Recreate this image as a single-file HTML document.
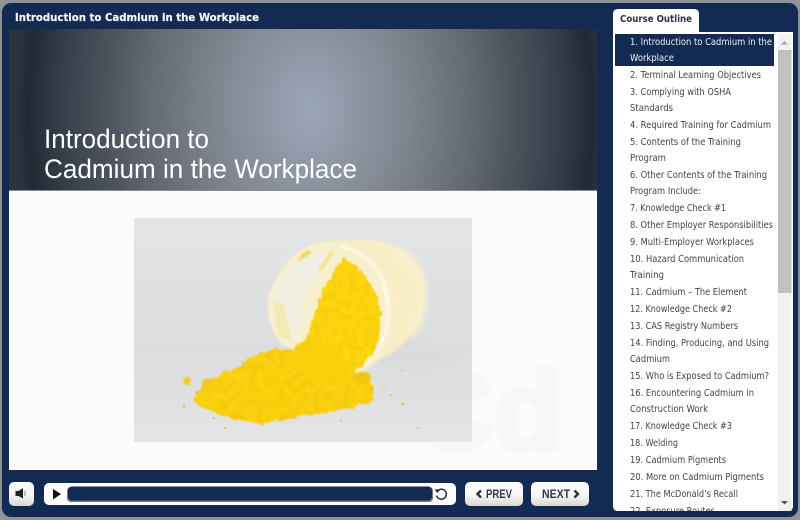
<!DOCTYPE html>
<html><head><meta charset="utf-8"><style>
html,body{margin:0;padding:0;background:#8a8d90}
#w{position:relative;width:800px;height:520px;overflow:hidden;background:#8f9295}
#f{position:absolute;left:2px;top:3px;width:796px;height:514px;background:#132a52;border-radius:9px}
#h{position:absolute;left:9px;top:29px;width:588px;height:162px;background:radial-gradient(ellipse 294px 400px at 301px 82px,#9ba6b8 0%,#7f858f 33%,#5f666f 58%,#4e555f 68%,#353f4a 85%,#1f2a35 96%,#2a343e 100%)}
#b{position:absolute;left:9px;top:191px;width:588px;height:279px;background:#fbfbfb}
svg{position:absolute;left:0;top:0}
</style></head><body><div id="w"><div id="f"></div><div id="h"></div><div id="b"></div>
<svg width="800" height="520" viewBox="0 0 800 520" xmlns="http://www.w3.org/2000/svg">
<defs>
<linearGradient id="ph" x1="0" y1="0" x2="0" y2="1"><stop offset="0" stop-color="#e3e4e6"/><stop offset=".6" stop-color="#dcdddf"/><stop offset="1" stop-color="#e4e4e6"/></linearGradient>
<linearGradient id="btn" x1="0" y1="0" x2="0" y2="1"><stop offset="0" stop-color="#ffffff"/><stop offset=".5" stop-color="#f8f8f8"/><stop offset="1" stop-color="#d8d8d8"/></linearGradient>
<filter id="b1" x="-20%" y="-20%" width="140%" height="140%"><feGaussianBlur stdDeviation="1"/></filter>
<filter id="b3" x="-30%" y="-30%" width="160%" height="160%"><feGaussianBlur stdDeviation="4"/></filter>
<filter id="pw" x="-10%" y="-10%" width="120%" height="120%">
<feTurbulence type="fractalNoise" baseFrequency=".14" numOctaves="3" seed="4" result="n"/>
<feDisplacementMap in="SourceGraphic" in2="n" xChannelSelector="R" yChannelSelector="G" scale="8" result="d"/>
<feColorMatrix in="n" type="matrix" values="1 0 0 0 0 1 0 0 0 0 1 0 0 0 0 0 0 0 0 1" result="g"/>
<feComposite in="d" in2="g" operator="arithmetic" k1=".22" k2=".89" k3="0" k4="0" result="t"/>
<feComposite in="t" in2="d" operator="in"/>
<feGaussianBlur stdDeviation=".9"/>
</filter>
<clipPath id="pc"><rect x="134" y="218" width="338" height="224"/></clipPath>
<clipPath id="lc"><rect x="613" y="32" width="165" height="479"/></clipPath>
</defs>

<!-- heading -->
<g fill="#fff" font-family="'Liberation Sans',sans-serif" font-size="26.600">
<text x="44" y="148" textLength="165" lengthAdjust="spacingAndGlyphs">Introduction to</text>
<text x="44" y="178" textLength="313" lengthAdjust="spacingAndGlyphs">Cadmium in the Workplace</text>
</g>
<rect x="9" y="190" width="588" height="1" fill="#8a8d92"/>
<text x="15" y="21" fill="#f4f5f7" stroke="#f4f5f7" stroke-width=".2" font-family="'DejaVu Sans',sans-serif" font-weight="700" font-size="11" textLength="244" lengthAdjust="spacingAndGlyphs">Introduction to Cadmium in the Workplace</text>

<!-- watermark -->
<text x="562" y="450" text-anchor="end" fill="#f7f7f7" stroke="#f7f7f7" stroke-width="5" font-family="'Liberation Sans',sans-serif" font-weight="700" font-size="112">Cd</text>

<!-- photo -->
<g clip-path="url(#pc)">
<rect x="134" y="218" width="338" height="224" fill="url(#ph)"/>
<ellipse cx="415" cy="358" rx="40" ry="16" fill="#d9dadc" filter="url(#b3)" opacity=".5"/>
<path d="M315 244Q345 238 372 240Q405 244 421 268Q430 295 418 325Q402 350 378 360L352 374Z" fill="#f8edc4" filter="url(#b1)"/>
<path d="M395 252Q416 264 421 290Q424 312 410 335" fill="none" stroke="#faf1cf" stroke-width="9" filter="url(#b3)"/>
<path d="M268 300Q282 254 316 243Q352 238 380 266Q398 296 394 330Q385 360 360 373Q345 376 320 358L282 345Q266 325 268 300Z" fill="#f8f0cc" filter="url(#b1)"/>
<path d="M340 246Q368 252 382 278Q392 305 386 332Q378 356 358 368" fill="none" stroke="#fdf9e6" stroke-width="3" filter="url(#b1)"/>
<path d="M272 300Q288 256 318 250Q332 252 322 268Q300 300 298 340L285 342Q272 325 272 300Z" fill="#f3efe2" filter="url(#b1)"/>
<path d="M272 300L278 335L292 342L284 305Z" fill="#f4e8a8" opacity=".8" filter="url(#b1)"/>
<path d="M302 253Q314 248 310 254L298 262Z" fill="#f0d040" opacity=".8" filter="url(#b1)"/>
<path d="M332 252Q326 262 320 270" stroke="#f3de7a" stroke-width="3" fill="none" filter="url(#b1)"/>
<path d="M343 257Q365 270 378 298Q385 325 377 345Q365 368 350 373L320 358L302 343Q308 335 312 325Q318 290 343 257Z" fill="#fad308" filter="url(#pw)"/>
<path d="M193 403L203 382L237 367L258 352L277 349L302 350L330 366L370 377L375 400L345 410L317 414L290 418L263 424L232 419Z" fill="#f8cf08" filter="url(#pw)"/>
<path d="M296 345L312 338L345 360L352 378L318 384L288 362Z" fill="#f8cf08" filter="url(#b1)"/>
<ellipse cx="362" cy="378" rx="8" ry="6" fill="#f1c409" filter="url(#b1)"/>
<ellipse cx="187" cy="381" rx="3.500" ry="4" fill="#f2c80f" filter="url(#b1)"/>
<ellipse cx="207" cy="383" rx="5" ry="4" fill="#efc51a" filter="url(#b1)"/>
<ellipse cx="236" cy="416" rx="6" ry="3.500" fill="#f3c80e" filter="url(#b1)"/>
<g fill="#ecc83a"><circle cx="197" cy="393" r="2"/><circle cx="184" cy="406" r="1.500"/><circle cx="402" cy="371" r="1"/><circle cx="403" cy="404" r="1.500"/><circle cx="391" cy="395" r="1"/><circle cx="341" cy="421" r="1.200"/><circle cx="418" cy="428" r="1"/><circle cx="384" cy="387" r="1"/><circle cx="214" cy="418" r="1.200"/><circle cx="225" cy="428" r="1"/></g>
</g>

<!-- controls -->
<rect x="9" y="482" width="25" height="24" rx="5" fill="url(#btn)"/>
<path d="M15.500 491H18.500L23 488V498.500L18.500 496H15.500Z" fill="#222"/>
<path d="M25 490.500V496" stroke="#888" stroke-width="1"/>
<rect x="44" y="483" width="412" height="22" rx="5" fill="#fff"/>
<path d="M53 489L61 494L53 499.500Z" fill="#111"/>
<rect x="67" y="487" width="366" height="15" rx="4" fill="#6b7280"/>
<rect x="68" y="486.500" width="364" height="14" rx="4" fill="#132a52"/>
<path d="M437.500 491A5 5 0 1 1 436.500 495.500" fill="none" stroke="#222" stroke-width="1.400"/>
<path d="M434.500 489.500L440 489.500L437.500 493Z" fill="#222"/>
<rect x="465" y="482" width="58" height="24" rx="5" fill="url(#btn)"/>
<rect x="531" y="482" width="58" height="24" rx="5" fill="url(#btn)"/>
<path d="M481 490.500L477.500 494L481 497.500" fill="none" stroke="#2b3340" stroke-width="2.400"/>
<path d="M574.500 490.500L578 494L574.500 497.500" fill="none" stroke="#2b3340" stroke-width="2.400"/>
<g fill="#2f3745" font-family="'Liberation Sans',sans-serif" font-weight="700" font-size="11.500">
<text x="486" y="498" textLength="26" lengthAdjust="spacingAndGlyphs">PREV</text>
<text x="542" y="498" textLength="28" lengthAdjust="spacingAndGlyphs">NEXT</text>
</g>

<!-- outline -->
<path d="M613 33V14Q613 9 618 9H694Q699 9 699 14V33Z" fill="#fff"/>
<text x="620" y="22" fill="#2c3442" font-family="'DejaVu Sans',sans-serif" font-weight="700" font-size="10" textLength="72" lengthAdjust="spacingAndGlyphs">Course Outline</text>
<path d="M613 32H793V506Q793 511 788 511H618Q613 511 613 506Z" fill="#fff"/>
<path d="M778 34H791.500V511H778Z" fill="#f1f1f1"/>
<rect x="778" y="50" width="13.500" height="243" fill="#c1c1c1"/>
<path d="M781 44.500L784.500 41L788 44.500Z" fill="#a3a3a3"/>
<path d="M781 501L784.500 504.500L788 501Z" fill="#505050"/>
<rect x="615" y="34" width="159" height="32" fill="#132a52"/>
<g clip-path="url(#lc)" font-family="'DejaVu Sans',sans-serif" font-size="9.300" fill="#444">
<g fill="#eef0f4">
<text x="630" y="45" textLength="142" lengthAdjust="spacingAndGlyphs">1. Introduction to Cadmium in the</text>
<text x="630" y="61" textLength="44" lengthAdjust="spacingAndGlyphs">Workplace</text>
</g>
<text x="630" y="78" textLength="131" lengthAdjust="spacingAndGlyphs">2. Terminal Learning Objectives</text>
<text x="630" y="95" textLength="101" lengthAdjust="spacingAndGlyphs">3. Complying with OSHA</text>
<text x="630" y="111" textLength="43" lengthAdjust="spacingAndGlyphs">Standards</text>
<text x="630" y="128" textLength="141" lengthAdjust="spacingAndGlyphs">4. Required Training for Cadmium</text>
<text x="630" y="145" textLength="111" lengthAdjust="spacingAndGlyphs">5. Contents of the Training</text>
<text x="630" y="161" textLength="36" lengthAdjust="spacingAndGlyphs">Program</text>
<text x="630" y="178" textLength="137" lengthAdjust="spacingAndGlyphs">6. Other Contents of the Training</text>
<text x="630" y="194" textLength="71" lengthAdjust="spacingAndGlyphs">Program Include:</text>
<text x="630" y="211" textLength="96" lengthAdjust="spacingAndGlyphs">7. Knowledge Check #1</text>
<text x="630" y="228" textLength="143" lengthAdjust="spacingAndGlyphs">8. Other Employer Responsibilities</text>
<text x="630" y="245" textLength="124" lengthAdjust="spacingAndGlyphs">9. Multi-Employer Workplaces</text>
<text x="630" y="262" textLength="114" lengthAdjust="spacingAndGlyphs">10. Hazard Communication</text>
<text x="630" y="278" textLength="34" lengthAdjust="spacingAndGlyphs">Training</text>
<text x="630" y="295" textLength="117" lengthAdjust="spacingAndGlyphs">11. Cadmium – The Element</text>
<text x="630" y="312" textLength="102" lengthAdjust="spacingAndGlyphs">12. Knowledge Check #2</text>
<text x="630" y="329" textLength="108" lengthAdjust="spacingAndGlyphs">13. CAS Registry Numbers</text>
<text x="630" y="346" textLength="139" lengthAdjust="spacingAndGlyphs">14. Finding, Producing, and Using</text>
<text x="630" y="362" textLength="40" lengthAdjust="spacingAndGlyphs">Cadmium</text>
<text x="630" y="379" textLength="139" lengthAdjust="spacingAndGlyphs">15. Who is Exposed to Cadmium?</text>
<text x="630" y="396" textLength="124" lengthAdjust="spacingAndGlyphs">16. Encountering Cadmium in</text>
<text x="630" y="412" textLength="78" lengthAdjust="spacingAndGlyphs">Construction Work</text>
<text x="630" y="429" textLength="102" lengthAdjust="spacingAndGlyphs">17. Knowledge Check #3</text>
<text x="630" y="446" textLength="48" lengthAdjust="spacingAndGlyphs">18. Welding</text>
<text x="630" y="463" textLength="96" lengthAdjust="spacingAndGlyphs">19. Cadmium Pigments</text>
<text x="630" y="480" textLength="134" lengthAdjust="spacingAndGlyphs">20. More on Cadmium Pigments</text>
<text x="630" y="497" textLength="108" lengthAdjust="spacingAndGlyphs">21. The McDonald’s Recall</text>
<text x="630" y="514" textLength="85" lengthAdjust="spacingAndGlyphs">22. Exposure Routes</text>
</g>
</svg></div></body></html>
